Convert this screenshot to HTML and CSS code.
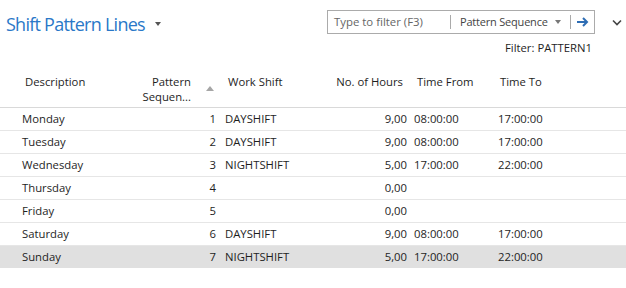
FILE: index.html
```html
<!DOCTYPE html>
<html lang="en">
<head>
    <meta charset="UTF-8">
    <title>Shift Pattern Lines</title>
    <link rel="stylesheet" href="styles.css">
</head>
<body>
    <!-- Top bar -->
    <div class="top">
        <h1 class="title">Shift Pattern Lines <span class="caret"></span></h1>
        <div class="search">
            <div class="filter">
                <span class="ph">Type to filter (F3)</span>
                <span class="field"><span>Pattern Sequence</span><span class="caret small"></span></span>
                <span class="go">
                    <svg width="13" height="12" viewBox="0 0 13 12"><path d="M1 6h10M7 2l4 4-4 4" fill="none" stroke="#2e6db4" stroke-width="2"/></svg>
                </span>
            </div>
            <span class="more">
                <svg width="10" height="7" viewBox="0 0 10 7"><path d="M1 1.5l4 4 4-4" fill="none" stroke="#444" stroke-width="1.6"/></svg>
            </span>
        </div>
    </div>
    <div class="filter-label">Filter: PATTERN1</div>

    <!-- Lines -->
    <div class="lines">
        <div class="row head">
            <div class="c desc">Description</div>
            <div class="c seq"><span class="seq-text">Pattern<br>Sequen...</span><span class="sort"></span></div>
            <div class="c shift">Work Shift</div>
            <div class="c hours">No. of Hours</div>
            <div class="c from">Time From</div>
            <div class="c to">Time To</div>
        </div>
        <div class="row">
            <div class="c desc">Monday</div><div class="c seq">1</div><div class="c shift">DAYSHIFT</div>
            <div class="c hours">9,00</div><div class="c from">08:00:00</div><div class="c to">17:00:00</div>
        </div>
        <div class="row">
            <div class="c desc">Tuesday</div><div class="c seq">2</div><div class="c shift">DAYSHIFT</div>
            <div class="c hours">9,00</div><div class="c from">08:00:00</div><div class="c to">17:00:00</div>
        </div>
        <div class="row">
            <div class="c desc">Wednesday</div><div class="c seq">3</div><div class="c shift">NIGHTSHIFT</div>
            <div class="c hours">5,00</div><div class="c from">17:00:00</div><div class="c to">22:00:00</div>
        </div>
        <div class="row">
            <div class="c desc">Thursday</div><div class="c seq">4</div><div class="c shift"></div>
            <div class="c hours">0,00</div><div class="c from"></div><div class="c to"></div>
        </div>
        <div class="row">
            <div class="c desc">Friday</div><div class="c seq">5</div><div class="c shift"></div>
            <div class="c hours">0,00</div><div class="c from"></div><div class="c to"></div>
        </div>
        <div class="row">
            <div class="c desc">Saturday</div><div class="c seq">6</div><div class="c shift">DAYSHIFT</div>
            <div class="c hours">9,00</div><div class="c from">08:00:00</div><div class="c to">17:00:00</div>
        </div>
        <div class="row selected">
            <div class="c desc">Sunday</div><div class="c seq">7</div><div class="c shift">NIGHTSHIFT</div>
            <div class="c hours">5,00</div><div class="c from">17:00:00</div><div class="c to">22:00:00</div>
        </div>
    </div>
</body>
</html>
```

FILE: styles.css
```css
body { margin: 0; background: #fff; color: #1e1e1e; font-family: "Segoe UI", "Open Sans", sans-serif; font-size: 11.3px; }

.top { display: flex; justify-content: space-between; align-items: center; padding: 10px 0 0 6px; height: 24px; }
.title { margin: 3px 0 0; font-size: 18px; font-weight: normal; line-height: 24px; color: #2a78c8; letter-spacing: -0.75px; display: flex; align-items: center; }
.caret { display: inline-block; width: 0; height: 0; border-left: 3.5px solid transparent; border-right: 3.5px solid transparent; border-top: 4px solid #555; margin-left: 10px; }
.caret.small { border-top-color: #777; margin-left: 0; }

.search { display: flex; align-items: center; }
.filter { display: flex; align-items: center; width: 266px; height: 22px; border: 1px solid #ababab; font-size: 11.4px; white-space: nowrap; }
.ph { width: 116px; padding-left: 6px; color: #666; border-right: 1px solid #aaa; line-height: 14px; }
.field { width: 101px; padding: 0 9px 0 9px; color: #444; font-size: 11px; letter-spacing: -0.2px; border-right: 1px solid #aaa; line-height: 14px; display: flex; align-items: center; justify-content: space-between; }
.go { flex: 1; display: flex; justify-content: center; }
.more { width: 31px; display: flex; justify-content: flex-end; padding-right: 4px; box-sizing: border-box; }

.filter-label { text-align: right; padding-right: 34px; margin-top: 6px; line-height: 15px; }

.lines { margin-top: 19px; }
.row { display: grid; grid-template-columns: 140px 80px 110px 80px 85px 1fr; height: 22px; line-height: 22px; border-bottom: 1px solid #e6e6e6; }
.row.head { height: 33px; line-height: 15px; border-bottom-color: #d9d9d9; }
.row.selected { background: #e0e0e0; border-bottom: none; }

.c { white-space: nowrap; }
.desc { padding-left: 22px; }
.seq { text-align: right; padding-right: 4px; }
.shift { padding-left: 5px; }
.hours { text-align: right; padding-right: 3px; }
.from { padding-left: 4px; }
.to { padding-left: 3px; }

.head .desc { padding-left: 25px; }
.head .seq { display: flex; justify-content: flex-end; padding-right: 6px; }
.head .seq-text { text-align: right; }
.sort { width: 0; height: 0; border-left: 4.5px solid transparent; border-right: 4.5px solid transparent; border-bottom: 5px solid #a6a6a6; margin: 12px 0 0 15px; }
.head .shift { padding-left: 8px; }
.head .hours { padding-right: 7px; }
.head .from { padding-left: 7px; }
.head .to { padding-left: 5px; }
```
